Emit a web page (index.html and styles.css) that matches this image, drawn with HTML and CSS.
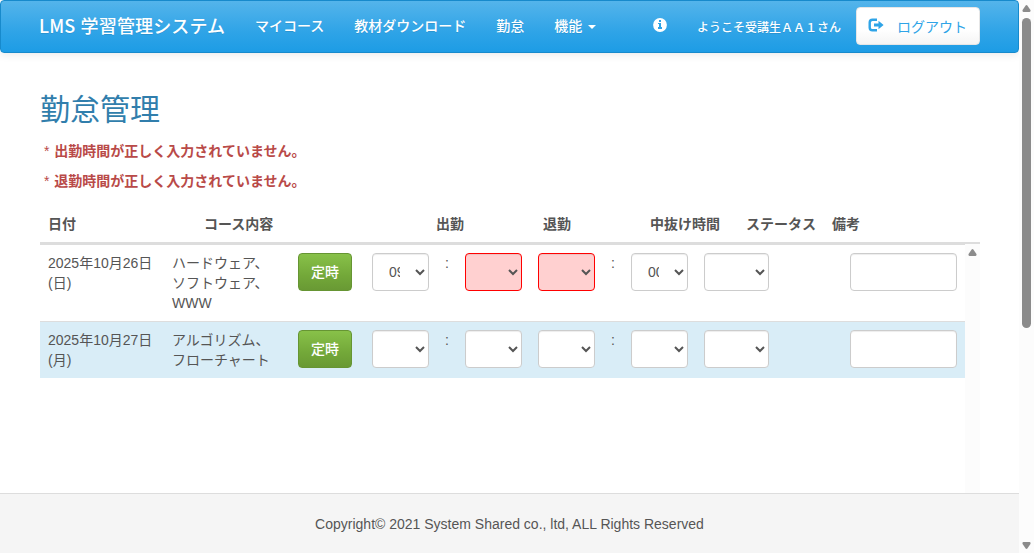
FILE: index.html
```html
<!DOCTYPE html>
<html lang="ja">
<head>
<meta charset="utf-8">
<title>勤怠管理</title>
<link rel="stylesheet" href="styles.css">
</head>
<body>
<div class="page">
  <nav class="navbar">
    <a class="brand">LMS 学習管理システム</a>
    <div class="menu">
      <a>マイコース</a>
      <a>教材ダウンロード</a>
      <a>勤怠</a>
      <a class="dropdown">機能<span class="caret"></span></a>
    </div>
    <div class="account">
      <svg class="info" viewBox="0 0 14 14"><circle cx="7" cy="7" r="6.9" fill="#fff"/><path fill="#2fa4e7" d="M6 2h2v2H6zM5 5h3v4h1v2H5V9h1V6H5z"/></svg>
      <span class="welcome">ようこそ受講生ＡＡ１さん</span>
      <button class="logout">
        <svg viewBox="0 0 16 14"><path fill="none" stroke="#2fa4e7" stroke-width="2.400" d="M9 1.700H4.500Q1.700 1.700 1.700 4.500V9.500Q1.700 12.300 4.500 12.300H9"/><path fill="#2fa4e7" d="M10.500 2.800L15.600 7 10.500 11.200V8.500H6V5.500H10.500z"/></svg>
        <span>ログアウト</span>
      </button>
    </div>
  </nav>
  <main class="content">
    <h1>勤怠管理</h1>
    <p class="error"><span class="mark">*</span> 出勤時間が正しく入力されていません。</p>
    <p class="error"><span class="mark">*</span> 退勤時間が正しく入力されていません。</p>
    <div class="thead">
      <span>日付</span><span>コース内容</span><span>出勤</span><span>退勤</span><span>中抜け時間</span><span>ステータス</span><span>備考</span>
    </div>
    <div class="tbody">
      <div class="rows">
        <div class="row">
          <div>2025年10月26日(日)</div>
          <div>ハードウェア、ソフトウェア、WWW</div>
          <div><button class="regular">定時</button></div>
          <div><select><option>09</option></select></div>
          <div>:</div>
          <div><select class="invalid"><option></option></select></div>
          <div><select class="invalid"><option></option></select></div>
          <div>:</div>
          <div><select><option>00</option></select></div>
          <div><select><option></option></select></div>
          <div><input type="text"></div>
        </div>
        <div class="row sunday">
          <div>2025年10月27日(月)</div>
          <div>アルゴリズム、フローチャート</div>
          <div><button class="regular">定時</button></div>
          <div><select><option></option></select></div>
          <div>:</div>
          <div><select><option></option></select></div>
          <div><select><option></option></select></div>
          <div>:</div>
          <div><select><option></option></select></div>
          <div><select><option></option></select></div>
          <div><input type="text"></div>
        </div>
      </div>
      <div class="track">
        <svg class="arrow" viewBox="0 0 10 8"><path d="M4 .6Q5-.4 6 .6L9.500 5.700Q10 8 8.500 8H1.500Q0 8 .5 5.700z"/></svg>
      </div>
    </div>
  </main>
  <footer>Copyright© 2021 System Shared co., ltd, ALL Rights Reserved</footer>
</div>
<div class="scrollbar">
  <svg class="arrow" viewBox="0 0 10 8"><path d="M4 .6Q5-.4 6 .6L9.500 5.700Q10 8 8.500 8H1.500Q0 8 .5 5.700z"/></svg>
  <div class="thumb"></div>
  <svg class="arrow down" viewBox="0 0 10 8"><path d="M4 .6Q5-.4 6 .6L9.500 5.700Q10 8 8.500 8H1.500Q0 8 .5 5.700z"/></svg>
</div>
</body>
</html>
```
FILE: styles.css
```css
* { box-sizing: border-box; }
body {
  margin: 0;
  height: 553px;
  display: flex;
  overflow: hidden;
  background: #fff;
  color: #555;
  font: 14px/20px "Liberation Sans", "Noto Sans CJK JP", sans-serif;
}
button, select, input { font: inherit; color: inherit; }
.page { width: 1019px; height: 553px; display: flex; flex-direction: column; }
.navbar {
  flex: none;
  height: 53px;
  display: flex;
  align-items: center;
  padding: 0 38px 3px;
  border: 1px solid #178acc;
  border-radius: 4px;
  background: linear-gradient(#54b4eb, #2fa4e7 60%, #1d9ce5);
  box-shadow: 0 1px 10px rgba(0, 0, 0, .1);
  color: #fff;
  font-family: "Noto Sans CJK JP", sans-serif;
  font-weight: 500;
  text-shadow: 0 1px 0 rgba(0, 0, 0, .1);
  white-space: nowrap;
}
.brand { width: 216px; font-size: 18px; word-spacing: 1px; letter-spacing: .15px; }
.menu { display: flex; gap: 30px; }
.dropdown { display: flex; align-items: center; gap: 6px; }
.caret { border: 4px solid transparent; border-top-color: #fff; border-bottom: 0; margin-top: 3px; }
.account { margin-left: auto; display: flex; align-items: center; }
.info { width: 14px; height: 14px; margin-right: 30px; }
.welcome { font-size: 12px; margin-right: 15px; padding-top: 3px; }
.logout {
  width: 124px;
  height: 38px;
  margin-top: 1px;
  padding: 0 0 0 11px;
  display: flex;
  align-items: center;
  gap: 13px;
  border: 1px solid #e6e6e6;
  border-radius: 4px;
  background: linear-gradient(#fff, #fff 60%, #f5f5f5);
  color: #2fa4e7;
  font-weight: 400;
}
.logout svg { width: 16px; height: 14px; margin-top: -2px; }
.content { flex: 1; display: flex; flex-direction: column; width: 940px; margin-left: 40px; padding-top: 37px; }
h1 { margin: 0 0 11px; color: #317eac; font-size: 30px; line-height: 40px; font-weight: 400; }
.error { margin: 0 0 10px; padding-left: 4px; line-height: 20px; color: #b94a48; font-weight: 600; }
.mark { margin-right: 1px; font-weight: 400; }
.thead {
  display: grid;
  grid-template-columns: 156px 232px 107px 107px 96px 86px 1fr;
  height: 43px;
  padding-top: 13px;
  border-bottom: 2px solid #ddd;
  font-weight: 600;
}
.thead span { padding-left: 8px; }
.tbody { flex: 1; display: flex; }
.rows { width: 925px; }
.row {
  display: grid;
  grid-template-columns: 124px 126px 74px 73px 20px 73px 73px 20px 73px 146px 123px;
  border-top: 1px solid #ddd;
}
.row > div { padding: 8px; min-height: 56px; }
.row > div:nth-child(n+3) { height: 40px; padding-right: 0; }
.sunday { background: #d9edf7; }
.regular {
  display: block;
  width: 54px;
  height: 38px;
  padding: 0;
  border: 1px solid #669533;
  border-radius: 4px;
  background: linear-gradient(#88c149, #73a839 60%, #699934);
  color: #fff;
  font-weight: 500;
}
select, input {
  display: block;
  width: 57px;
  height: 38px;
  padding: 8px 12px;
  border: 1px solid #ccc;
  border-radius: 4px;
  background: #fff;
  box-shadow: inset 0 1px 1px rgba(0, 0, 0, .075);
}
.row > div:nth-child(10) select { width: 65px; }
input { width: 107px; }
.invalid { border-color: #f00; background: #ffd0d0; }
.track { width: 15px; background: #fcfcfc; padding: 5px 3px; }
.arrow { display: block; width: 9px; height: 7px; fill: #8b8b8b; }
footer {
  flex: none;
  height: 60px;
  border-top: 1px solid #ddd;
  background: #f5f5f5;
  text-align: center;
  padding-top: 20px;
}
.scrollbar {
  width: 15px;
  height: 553px;
  display: flex;
  flex-direction: column;
  align-items: center;
  padding: 5px 0 4px;
  background: #fcfcfc;
}
.thumb { width: 9px; height: 310px; margin-top: 6px; border-radius: 5px; background: #8b8b8b; }
.down { margin-top: auto; transform: rotate(180deg); }
```
